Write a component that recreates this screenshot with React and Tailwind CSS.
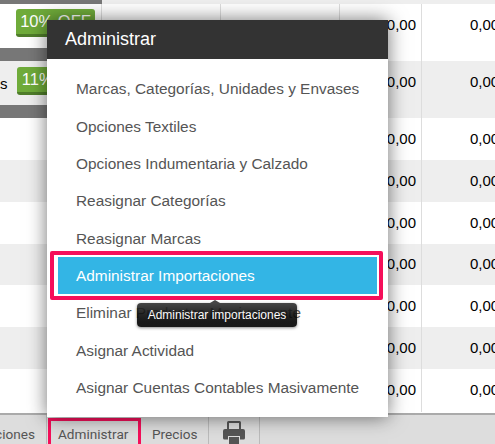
const rows = [
  { h: 'h-[57px]', gray: false, band: true, badge: '10% OFF', badgeTop: 'pt-[5px]', badgeRight: 'pr-[6px]' },
  { h: 'h-[57px]', gray: true, band: true, badge: '11% OFF', label: 's', badgeTop: 'pt-[6px]', badgeRight: 'pr-[5px]' },
  { h: 'h-[42px]', gray: false },
  { h: 'h-[42px]', gray: true },
  { h: 'h-[42px]', gray: false },
  { h: 'h-[41px]', gray: true },
  { h: 'h-[42px]', gray: false },
  { h: 'h-[42px]', gray: true },
  { h: 'h-[43px]', gray: false },
]

const items = [
  'Marcas, Categorías, Unidades y Envases',
  'Opciones Textiles',
  'Opciones Indumentaria y Calzado',
  'Reasignar Categorías',
  'Reasignar Marcas',
  'Administrar Importaciones',
  'Eliminar Productos Masivamente',
  'Asignar Actividad',
  'Asignar Cuentas Contables Masivamente',
]

function PrinterIcon() {
  return (
    <svg width="22" height="24" viewBox="0 0 22 24" className="text-[#555555]" fill="currentColor">
      <path d="M4 1.5A1.5 1.5 0 0 1 5.5 0h11A1.5 1.5 0 0 1 18 1.5V8h-2V2H6v6H4z" />
      <path d="M2 8h18a2 2 0 0 1 2 2v7a1.5 1.5 0 0 1-1.5 1.5H17V15H5v3.5H1.500A1.500 1.500 0 0 1 0 17v-7a2 2 0 0 1 2-2z" />
      <rect x="6" y="16" width="10" height="8" />
    </svg>
  )
}

function Row({ row }) {
  return (
    <div className={`flex ${row.h} ${row.gray ? 'bg-[#eeeeee]' : 'bg-white'}`}>
      <div className="flex flex-col w-[102px] shrink-0 border-r border-[#dddddd]">
        <div className={`flex-1 flex items-start justify-end relative ${row.badgeTop || ''} ${row.badgeRight || ''}`}>
          {row.label && <span className="absolute left-0 top-[12px] text-[15px] text-black">{row.label}</span>}
          {row.badge && (
            <span className="h-[28px] w-[79px] flex items-center justify-center bg-[#6fab3a] border-b-[3px] border-[#4f7d2a] rounded-[3px] text-white text-[16.5px] whitespace-nowrap">
              {row.badge}
            </span>
          )}
        </div>
        {row.band && <div className="h-[13px] bg-[#777777]" />}
      </div>
      <div className="w-[119px] shrink-0 border-r border-[#dddddd] pt-[13px] pr-[7px] text-right font-bold text-[15px] text-black">
        {row.badge ? '15,00' : ''}
      </div>
      <div className="w-[119px] shrink-0 border-r border-[#dddddd] pt-[13px] pr-[7px] text-right font-bold text-[15px] text-black">
        {row.badge ? '15,00' : ''}
      </div>
      <div className="w-[82px] shrink-0 border-r border-[#dddddd] flex items-center justify-end pr-[5px] text-[15px] text-black">
        {row.badge ? <span className="self-start pt-[10px]">0,00</span> : '0,00'}
      </div>
      <div className="w-[84px] shrink-0 flex items-center justify-start pl-[48px] text-[15px] text-black">
        {row.badge ? <span className="self-start pt-[10px]">0,00</span> : '0,00'}
      </div>
    </div>
  )
}

export default function App() {
  return (
    <div className="relative w-[495px] h-[444px] overflow-hidden bg-white font-['Liberation_Sans',Arial,sans-serif]">
      {/* tabla de fondo */}
      <div className="flex h-[4px] bg-[#eeeeee]">
        <div className="w-[102px] bg-[#777777]" />
      </div>
      {rows.map((row, i) => (
        <Row key={i} row={row} />
      ))}
      <div className="h-px bg-white" />

      {/* barra inferior */}
      <div className="flex h-[31px] bg-[#dddddd] border-t-2 border-[#aaaaaa] font-['Roboto',sans-serif] text-[13.6px] text-[#555555]">
        <div className="w-[47px] shrink-0 flex justify-end items-center pr-[11px] pt-[9px] overflow-hidden border-r border-[#bbbbbb] whitespace-nowrap">
          Importaciones
        </div>
        <div className="relative w-[95px] shrink-0 flex items-center pl-[11px] pt-[9px]">
          Administrar
          <div className="absolute left-[1px] right-[1px] top-[3px] h-[29px] border-[3px] border-[#f50f5a]" />
        </div>
        <div className="w-[67px] shrink-0 flex items-center pl-[10px] pt-[9px] border-r border-[#bbbbbb]">Precios</div>
        <div className="w-[51px] shrink-0 flex items-start justify-center pt-[6px] border-r border-[#bbbbbb]">
          <PrinterIcon />
        </div>
      </div>

      {/* menu desplegado */}
      <div className="absolute left-[47px] top-[20px] w-[341px] bg-white shadow-[0_0_18px_rgba(0,0,0,0.55)]">
        <div className="h-[39px] bg-[#333333] flex items-center pl-[18px] text-[18px] text-white">Administrar</div>
        <div className="pt-[11px] pb-[10px]">
          {items.map((item, i) => (
            <div
              key={item}
              className={`relative h-[37.4px] mx-[11px] pl-[18px] flex items-center text-[15.4px] whitespace-nowrap ${
                i === 5 ? 'bg-[#33b5e5] text-white' : 'text-[#555555]'
              }`}
            >
              {item}
              {i === 5 && (
                <>
                  <div className="absolute -left-[8px] -right-[6px] -top-[6px] -bottom-[6px] border-4 border-[#f50f5a] rounded-[2px]" />
                  <div className="absolute z-10 left-[79px] top-[46px] w-[160px] h-[24px] flex items-center justify-center rounded-[4px] bg-gradient-to-b from-[#333333] to-[#000000] opacity-90 shadow-[0_1px_3px_rgba(0,0,0,0.5)] text-[12px] text-white">
                    Administrar importaciones
                    <div className="absolute left-[73px] -top-[3px] w-0 h-0 border-x-[5px] border-x-transparent border-b-[3px] border-b-[#333333]" />
                  </div>
                </>
              )}
            </div>
          ))}
        </div>
      </div>
    </div>
  )
}
